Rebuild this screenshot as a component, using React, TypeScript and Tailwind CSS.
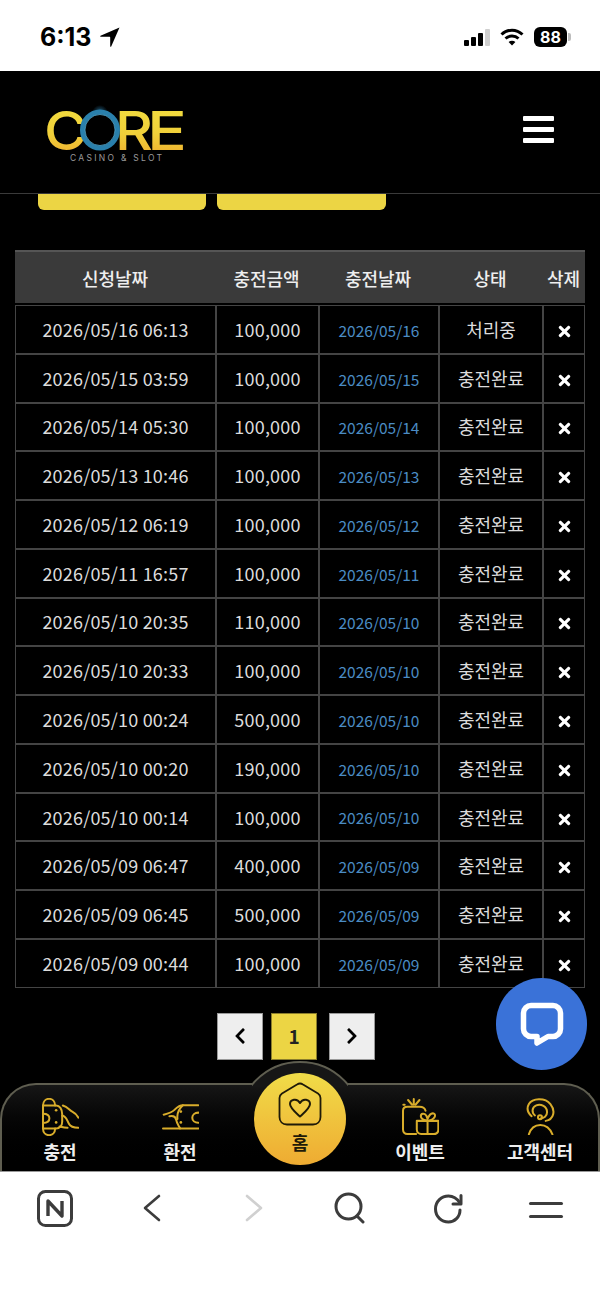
import React from "react";
import { FaTimes, FaChevronLeft, FaChevronRight } from "react-icons/fa";

const rows = [
  ["2026/05/16 06:13", "100,000", "2026/05/16", "처리중"],
  ["2026/05/15 03:59", "100,000", "2026/05/15", "충전완료"],
  ["2026/05/14 05:30", "100,000", "2026/05/14", "충전완료"],
  ["2026/05/13 10:46", "100,000", "2026/05/13", "충전완료"],
  ["2026/05/12 06:19", "100,000", "2026/05/12", "충전완료"],
  ["2026/05/11 16:57", "100,000", "2026/05/11", "충전완료"],
  ["2026/05/10 20:35", "110,000", "2026/05/10", "충전완료"],
  ["2026/05/10 20:33", "100,000", "2026/05/10", "충전완료"],
  ["2026/05/10 00:24", "500,000", "2026/05/10", "충전완료"],
  ["2026/05/10 00:20", "190,000", "2026/05/10", "충전완료"],
  ["2026/05/10 00:14", "100,000", "2026/05/10", "충전완료"],
  ["2026/05/09 06:47", "400,000", "2026/05/09", "충전완료"],
  ["2026/05/09 06:45", "500,000", "2026/05/09", "충전완료"],
  ["2026/05/09 00:44", "100,000", "2026/05/09", "충전완료"],
];

const headers = ["신청날짜", "충전금액", "충전날짜", "상태", "삭제"];

const Logo = () => (
  <svg width="142" height="60" viewBox="0 0 142 60" className="block overflow-visible">
    <defs>
      <linearGradient id="logoGold" x1="0" y1="0" x2="0" y2="1">
        <stop offset="0" stopColor="#f2e040" />
        <stop offset="0.55" stopColor="#f0d03a" />
        <stop offset="1" stopColor="#eea52c" />
      </linearGradient>
      <radialGradient id="logoGlow">
        <stop offset="0" stopColor="#2f86b5" stopOpacity="0.8" />
        <stop offset="1" stopColor="#2f86b5" stopOpacity="0" />
      </radialGradient>
    </defs>
    <circle cx="53" cy="8" r="8" fill="url(#logoGlow)" />
    <text x="-3" y="45" fontFamily="Inter" fontSize="54" fontWeight="500" fill="url(#logoGold)" textLength="43" lengthAdjust="spacingAndGlyphs">C</text>
    <text x="68" y="45" fontFamily="Inter" fontSize="54" fontWeight="500" fill="url(#logoGold)" textLength="38" lengthAdjust="spacingAndGlyphs">R</text>
    <text x="100" y="45" fontFamily="Inter" fontSize="54" fontWeight="500" fill="url(#logoGold)" textLength="40" lengthAdjust="spacingAndGlyphs">E</text>
    <ellipse cx="53" cy="25" rx="17.5" ry="18" fill="#000" stroke="#2a80ac" strokeWidth="5" />
    <ellipse cx="53" cy="25" rx="15" ry="15.5" fill="none" stroke="#5bb0d4" strokeWidth="0.7" />
    <text x="23" y="56" fontFamily="Inter" fontSize="8.5" fill="#9a9a9a" textLength="92" lengthAdjust="spacing">CASINO &amp; SLOT</text>
  </svg>
);

const ChargeIcon = () => (
  <svg width="37" height="38" viewBox="0 0 110 112" fill="none" stroke="#d9ad2b" strokeWidth="6" strokeLinecap="round">
    <path d="M3 22V90C3 102 11 110 21 110C31 110 39 102 39 90M3 22C3 10 11 2 21 2C31 2 39 10 39 22" />
    <path d="M3 22H42C52 22 60 32 60 48V70C60 82 52 90 42 90H3" />
    <path d="M3 46C16 46 22 52 22 60C22 68 16 74 3 74" />
    <path d="M62 22C76 26 82 36 90 40C98 44 104 50 108 58" />
    <path d="M60 52C72 52 74 66 80 76C84 84 92 88 108 88" />
    <path d="M52 84C60 86 66 88 76 88" />
    <circle cx="42" cy="36" r="4" fill="#d9ad2b" stroke="none" />
    <circle cx="42" cy="72" r="4" fill="#d9ad2b" stroke="none" />
  </svg>
);

const ExchangeIcon = () => (
  <svg width="37" height="26" viewBox="0 0 110 76" fill="none" stroke="#d9ad2b" strokeWidth="6" strokeLinecap="round">
    <path d="M108 3H62C50 3 44 10 38 16C30 24 18 28 5 31" />
    <path d="M22 36C32 34 40 36 42 46C44 58 50 64 54 72" />
    <path d="M3 72H108" />
    <path d="M62 3C50 14 44 30 46 44" />
    <path d="M108 25C97 25 90 32 90 40C90 48 97 55 108 55" />
    <circle cx="56" cy="22" r="4" fill="#d9ad2b" stroke="none" />
    <circle cx="56" cy="54" r="4" fill="#d9ad2b" stroke="none" />
  </svg>
);

const GiftIcon = () => (
  <svg width="37" height="37" viewBox="0 0 110 110" fill="none" stroke="#d9ad2b" strokeWidth="6" strokeLinecap="round" strokeLinejoin="round">
    <path d="M35 3V20M18 6L30 20M52 6L40 20M8 20H4" />
    <path d="M42 107H16C8 107 3 101 3 94V38C3 30 8 26 16 26H52C62 26 68 30 70 38" />
    <path d="M44 68H108V94C108 102 102 107 94 107H57C50 107 44 102 44 94Z" />
    <path d="M76 68V107" />
    <path d="M76 68C70 66 56 64 56 54C56 46 66 44 72 52L76 62C80 52 86 44 94 46C102 48 100 64 76 68Z" />
  </svg>
);

const AgentIcon = () => (
  <svg width="29" height="37" viewBox="0 0 85 110" fill="none" stroke="#d9ad2b" strokeWidth="6" strokeLinecap="round">
    <path d="M16 54C5 44 0 32 8 18C18 0 56 -2 72 18C88 38 82 64 58 68" />
    <path d="M26 52C16 44 16 28 30 22C44 16 62 26 62 42C62 54 52 60 44 60" />
    <circle cx="41" cy="57" r="6" />
    <path d="M8 108C14 88 28 80 42 80C56 80 70 88 78 108" />
  </svg>
);

const HomeIcon = () => (
  <svg width="44" height="44" viewBox="0 0 44 44" fill="none" stroke="#1f1a08" strokeWidth="1.8" strokeLinejoin="round">
    <path d="M1.5 16C1.5 14 2.5 12.5 4 11.5L19 2.5C21 1.2 23 1.2 25 2.5L40 11.5C41.5 12.5 42.5 14 42.5 16V35C42.5 39.5 39.5 42.5 35 42.5H9C4.5 42.5 1.5 39.5 1.5 35Z" />
    <path d="M22 34.5C17 30 12 26 12 22C12 17.5 19 15.5 22 21C25 15.5 32 17.5 32 22C32 26 27 30 22 34.5Z" strokeWidth="2" />
  </svg>
);

const NavItem = ({ icon, label }: { icon: React.ReactNode; label: string }) => (
  <div className="flex flex-col items-center">
    <div className="h-[38px] mt-[13px] flex items-center">{icon}</div>
    <span className="mt-[2px] text-[18px] leading-[26px] font-bold text-[#eeeeee]">{label}</span>
  </div>
);

export default function App() {
  return (
    <div
      className="relative w-[600px] h-[1298px] overflow-hidden bg-black"
      style={{ fontFamily: '"Noto Sans CJK KR", "Noto Sans", sans-serif' }}
    >
      {/* ios status bar */}
      <div className="h-[71px] bg-white flex items-center pl-[40px] pr-[29px] pt-[3px] justify-between">
        <div className="flex items-center gap-[8px]">
          <span className="text-[25px] font-bold text-black leading-none" style={{ fontFamily: "Inter, sans-serif" }}>6:13</span>
          <svg width="20" height="20" viewBox="0 0 20 20" fill="#000">
            <path d="M19.5 0.5L0.5 8.8C0 9.1 0.2 9.8 0.8 9.8H9.6C10 9.8 10.2 10 10.2 10.4V19.2C10.2 19.8 10.9 20 11.2 19.5L19.5 0.5Z" />
          </svg>
        </div>
        <div className="flex items-center">
          <div className="flex items-end gap-[2px] h-[17px]">
            <div className="w-[5px] h-[6px] rounded-[1px] bg-black" />
            <div className="w-[5px] h-[9px] rounded-[1px] bg-black" />
            <div className="w-[5px] h-[13px] rounded-[1px] bg-black" />
            <div className="w-[5px] h-[17px] rounded-[1px] bg-[#cfcfcf]" />
          </div>
          <svg className="ml-[10px]" width="24" height="18" viewBox="0 0 24 18" fill="none" stroke="#000" strokeWidth="3">
            <path d="M1.5 6.5C7.5 0.8 16.5 0.8 22.5 6.5" />
            <path d="M5.5 10.5C9 7.3 15 7.3 18.5 10.5" />
            <path d="M12 17.5L8.6 14C10.5 12.4 13.5 12.4 15.4 14Z" fill="#000" stroke="none" />
          </svg>
          <div className="ml-[10px] w-[33px] h-[20px] rounded-[6px] bg-black flex items-center justify-center">
            <span className="text-[16px] font-bold text-white leading-none" style={{ fontFamily: "Inter, sans-serif" }}>88</span>
          </div>
          <div className="ml-[1px] w-[3px] h-[8px] rounded-r-[2px] bg-[#bdbdbd]" />
        </div>
      </div>

      {/* site header */}
      <div className="h-[123px] flex items-center justify-between pl-[47px] pr-[46px] border-b border-[#3a3a3a]">
        <div className="mt-[6px]">
          <Logo />
        </div>
        <div className="flex flex-col gap-[6px] mb-[5px]">
          <div className="w-[31px] h-[5px] bg-white rounded-[1px]" />
          <div className="w-[31px] h-[5px] bg-white rounded-[1px]" />
          <div className="w-[31px] h-[5px] bg-white rounded-[1px]" />
        </div>
      </div>

      {/* buttons cut off by the header */}
      <div className="flex gap-[11px] pl-[38px]">
        <div className="w-[168px] h-[16px] rounded-b-[6px] bg-[#ecd544]" />
        <div className="w-[169px] h-[16px] rounded-b-[6px] bg-[#ecd544]" />
      </div>

      {/* table */}
      <div className="mt-[40px] mx-[15px] text-[#dcdcdc]">
        <div className="grid grid-cols-[200px_103px_120px_104px_1fr] h-[53px] bg-[#3a3a3a] border-t-2 border-[#555555] text-[18px] leading-none font-medium text-[#eeeeee]">
          {headers.map((h) => (
            <div key={h} className="flex items-center justify-center">
              {h}
            </div>
          ))}
        </div>
        <div className="mt-[2px] grid grid-cols-[199px_101px_118px_102px_1fr] auto-rows-[46.77px] gap-[2px] bg-[#444444] p-[1px]">
          {rows.map((r, i) => (
            <React.Fragment key={i}>
              <div className="bg-black flex items-center justify-center text-[18px] tracking-[0.2px]">{r[0]}</div>
              <div className="bg-black flex items-center justify-center text-[18px] tracking-[0.2px]">{r[1]}</div>
              <div className="bg-black flex items-center justify-center text-[15.5px] pt-[2px] text-[#4b8cc4]">{r[2]}</div>
              <div className="bg-black flex items-center justify-center text-[18px]">{r[3]}</div>
              <div className="bg-black flex items-center justify-center pt-[4px] text-white">
                <FaTimes size={17} />
              </div>
            </React.Fragment>
          ))}
        </div>
      </div>

      {/* pagination */}
      <div className="mt-[25px] flex pl-[217px]">
        <div className="w-[46px] h-[47px] bg-[#eeeeee] border border-[#999999] flex items-center justify-center text-black">
          <FaChevronLeft size={18} />
        </div>
        <div className="ml-[8px] w-[46px] h-[47px] bg-[#ecd544] border border-[#8a7d2c] flex items-center justify-center text-[19px] font-bold text-[#222222]">
          1
        </div>
        <div className="ml-[12px] w-[46px] h-[47px] bg-[#eeeeee] border border-[#999999] flex items-center justify-center text-black">
          <FaChevronRight size={18} />
        </div>
      </div>

      {/* chat button */}
      <div className="absolute left-[496px] top-[978px] w-[91px] h-[92px] rounded-full bg-[#3a72d8] flex items-center justify-center">
        <svg width="44" height="44" viewBox="0 0 44 44" fill="none">
          <path d="M11 3.5H33C37 3.5 40.5 7 40.5 11V27C40.5 31 37 34.5 33 34.5H28L17 41V34.5H11C7 34.5 3.5 31 3.5 27V11C3.5 7 7 3.5 11 3.5Z" stroke="#fff" strokeWidth="5.5" strokeLinejoin="round" />
        </svg>
      </div>

      {/* bottom nav */}
      <div className="relative mt-[23px] h-[88px] rounded-t-[36px] border-t-2 border-x-2 border-[#5f5e50] bg-gradient-to-b from-[#161616] to-black">
        <div className="absolute left-[250px] -top-[24px] w-[96px] h-[26px] overflow-hidden">
          <div className="absolute -left-[15px] top-0 w-[126px] h-[126px] rounded-full border-2 border-[#5f5e50] bg-[#161616]" />
        </div>
        <div className="grid grid-cols-5 -mx-[2px]">
          <NavItem icon={<ChargeIcon />} label="충전" />
          <NavItem icon={<ExchangeIcon />} label="환전" />
          <div />
          <NavItem icon={<GiftIcon />} label="이벤트" />
          <NavItem icon={<AgentIcon />} label="고객센터" />
        </div>
        <div className="absolute left-[252px] -top-[12px] w-[92px] h-[92px] rounded-full bg-gradient-to-b from-[#f0dc48] to-[#eeab32] flex flex-col items-center">
          <div className="mt-[9px]">
            <HomeIcon />
          </div>
          <span className="mt-[5px] text-[18px] leading-[22px] font-bold text-[#1f1a08]">홈</span>
        </div>
      </div>

      {/* browser toolbar */}
      <div className="h-[127px] bg-white border-t border-[#999999] flex items-start pl-[37px] pt-[18px]">
        <svg width="36" height="37" viewBox="0 0 36 37" fill="none" stroke="#3c3c3c">
          <rect x="1.5" y="1.5" width="33" height="34" rx="7" strokeWidth="3" />
          <path d="M11 26V11L25 26V11" strokeWidth="3.4" strokeLinejoin="round" />
        </svg>
        <svg className="ml-[70px] mt-[4px]" width="18" height="28" viewBox="0 0 18 28" fill="none" stroke="#3c3c3c" strokeWidth="2.6" strokeLinecap="round" strokeLinejoin="round">
          <path d="M16 2L2 14L16 26" />
        </svg>
        <svg className="ml-[84px] mt-[4px]" width="18" height="28" viewBox="0 0 18 28" fill="none" stroke="#d0d0d0" strokeWidth="2.6" strokeLinecap="round" strokeLinejoin="round">
          <path d="M2 2L16 14L2 26" />
        </svg>
        <svg className="ml-[71px] mt-[2px]" width="31" height="32" viewBox="0 0 31 32" fill="none" stroke="#3c3c3c" strokeWidth="3" strokeLinecap="round">
          <circle cx="14.5" cy="14.5" r="12.5" />
          <path d="M23 24L29 30" />
        </svg>
        <svg className="ml-[68px] mt-[3px]" width="31" height="31" viewBox="0 0 31 31" fill="none" stroke="#3c3c3c" strokeWidth="3" strokeLinecap="round" strokeLinejoin="round">
          <path d="M27 17C27 24 21.5 29 15.5 29C8.5 29 2.5 23.5 2.5 16C2.5 8.5 8.5 3 15.5 3C20 3 24 5.5 27 10" />
          <path d="M28 2.5V11H20" />
        </svg>
        <div className="ml-[65px] mt-[12px] flex flex-col gap-[10px]">
          <div className="w-[34px] h-[3px] rounded-full bg-[#3c3c3c]" />
          <div className="w-[34px] h-[3px] rounded-full bg-[#3c3c3c]" />
        </div>
      </div>
    </div>
  );
}
